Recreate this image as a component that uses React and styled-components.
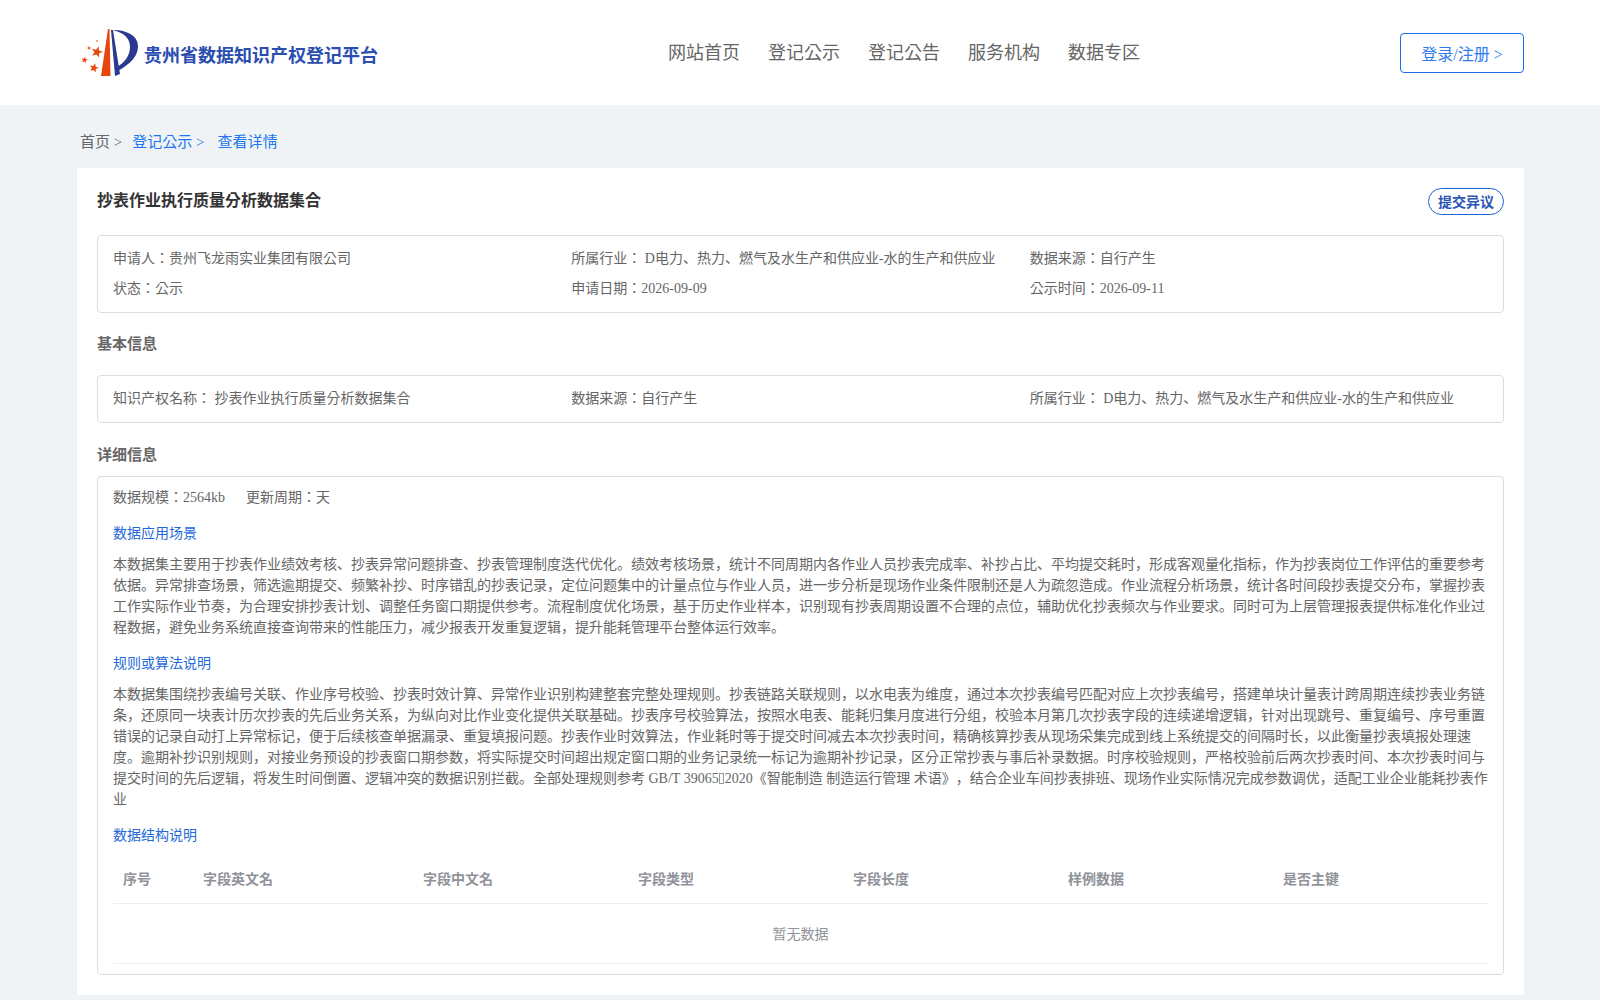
import React from 'react';
import styled, { createGlobalStyle } from 'styled-components';

const Global = createGlobalStyle`
  html, body { margin: 0; padding: 0; background: #eff3f6; }
  body { font-family: "Liberation Serif", "Noto Sans CJK KR", serif; color: #666; text-spacing-trim: space-all; }
  * { box-sizing: border-box; }
`;

const Page = styled.div`
  width: 1600px;
  height: 1000px;
  overflow: hidden;
  display: flex;
  flex-direction: column;
`;

const Header = styled.header`
  height: 105px;
  flex: none;
  background: #fff;
  display: grid;
  grid-template-columns: 588px auto 1fr;
  align-items: center;
  padding: 0 76px 0 80px;
`;

const Brand = styled.div`
  display: flex;
  align-items: center;
  gap: 6px;
`;

const BrandName = styled.span`
  font-size: 18px;
  font-weight: 700;
  color: #2a4eb0;
  position: relative;
  top: 1px;
`;

const Nav = styled.nav`
  display: flex;
  gap: 28px;
`;

const NavItem = styled.a`
  font-size: 18px;
  line-height: 26px;
  color: #666;
`;

const Login = styled.button`
  justify-self: end;
  width: 124px;
  height: 40px;
  background: #fff;
  border: 1px solid #1a6fe8;
  border-radius: 4px;
  color: #2f7cf0;
  font: inherit;
  font-size: 16px;
`;

const Crumbs = styled.div`
  height: 63px;
  flex: none;
  display: flex;
  align-items: center;
  padding: 7px 0 0 80px;
  font-size: 15px;
`;

const Crumb = styled.span`
  color: ${p => (p.$link ? '#2277ee' : '#666')};
  margin-right: ${p => p.$gap || 0}px;
`;

const Card = styled.main`
  margin: 0 76px 0 77px;
  height: 827px;
  flex: none;
  background: #fff;
  padding: 20px 20px;
`;

const TitleRow = styled.div`
  display: flex;
  justify-content: space-between;
  align-items: flex-start;
  height: 47px;
`;

const Title = styled.h1`
  margin: 1px 0 0;
  font-size: 16px;
  font-weight: 700;
  line-height: 24px;
  color: #333;
`;

const Objection = styled.button`
  width: 76px;
  height: 27px;
  padding: 0 0 2px;
  background: #fff;
  border: 1px solid #1a62d8;
  border-radius: 14px;
  color: #2a55b5;
  font: inherit;
  font-size: 14px;
  font-weight: 700;
`;

const Panel = styled.section`
  border: 1px solid #ddd;
  border-radius: 4px;
  padding: ${p => p.$pad || '0 15px'};
  height: ${p => (p.$h ? `${p.$h}px` : 'auto')};
`;

const InfoGrid = styled.div`
  display: grid;
  grid-template-columns: repeat(3, 1fr);
  row-gap: 9px;
  font-size: 14px;
  line-height: 21px;
`;

const SectionTitle = styled.h2`
  margin: 0;
  font-size: 15px;
  font-weight: 700;
  line-height: 22px;
  color: #666;
  padding-top: ${p => p.$top}px;
  padding-bottom: ${p => p.$bottom}px;
`;

const Meta = styled.div`
  display: flex;
  gap: 21px;
  font-size: 14px;
  line-height: 21px;
`;

const SubHeading = styled.h3`
  margin: ${p => p.$top}px 0 ${p => p.$bottom}px;
  font-size: 14px;
  font-weight: 400;
  line-height: 21px;
  color: #1f6ad8;
`;

const Para = styled.p`
  margin: 0;
  font-size: 14px;
  line-height: 21px;
  color: #666;
  word-break: break-all;
`;

const Tofu = styled.span`
  display: inline-block;
  width: 5px;
  height: 11px;
  margin: 0 0.5px;
  vertical-align: -1px;
  border: 1px solid #999;
`;

const Table = styled.table`
  width: 100%;
  border-collapse: collapse;
  table-layout: fixed;
  margin-top: 8px;
`;

const Th = styled.th`
  width: ${p => p.$w}px;
  height: 49px;
  padding: 0 10px;
  text-align: left;
  font-size: 14px;
  font-weight: 700;
  color: #909399;
  border-bottom: 1px solid #ebeef5;
`;

const Empty = styled.td`
  height: 60px;
  text-align: center;
  font-size: 14px;
  color: #909399;
  border-bottom: 1px solid #ebeef5;
`;

const starPath = (cx, cy, r, rot) => {
  const pts = [];
  for (let i = 0; i < 10; i++) {
    const rad = i % 2 === 0 ? r : r * 0.42;
    const a = ((-90 + rot + i * 36) * Math.PI) / 180;
    pts.push(`${(cx + rad * Math.cos(a)).toFixed(2)},${(cy + rad * Math.sin(a)).toFixed(2)}`);
  }
  return `M${pts.join('L')}Z`;
};

const Logo = () => (
  <svg width="58" height="52" viewBox="0 0 58 52" style={{ flex: 'none' }}>
    <path d="M28 2 L29.5 2 L30.5 49 L21 49 Z" fill="#e8460f" />
    <path d="M31 3 L33 3 L40 47 L35 49 Z" fill="#2b3990" />
    <path d="M33 3 C47 3 58 9 58 19 C58 32 46 39 38 44 L37 40 C44 36 50 29 50 20 C50 11 44 6 33 3 Z" fill="#2b3990" />
    <path d={starPath(17, 25, 6, 15)} fill="#e8460f" />
    <path d={starPath(4.5, 33, 3.4, 10)} fill="#e8460f" />
    <path d={starPath(14, 41, 4.8, 15)} fill="#e8460f" />
    <circle cx="9" cy="21" r="1.5" fill="#ec6a3c" />
    <circle cx="17" cy="14" r="1" fill="#ec8a66" />
  </svg>
);

const navItems = ['网站首页', '登记公示', '登记公告', '服务机构', '数据专区'];
const summary = [
  '申请人：贵州飞龙雨实业集团有限公司',
  '所属行业： D电力、热力、燃气及水生产和供应业-水的生产和供应业',
  '数据来源：自行产生',
  '状态：公示',
  '申请日期：2026-09-09',
  '公示时间：2026-09-11',
];
const basics = [
  '知识产权名称： 抄表作业执行质量分析数据集合',
  '数据来源：自行产生',
  '所属行业： D电力、热力、燃气及水生产和供应业-水的生产和供应业',
];
const columns = [
  ['序号', 80], ['字段英文名', 220], ['字段中文名', 215], ['字段类型', 215],
  ['字段长度', 215], ['样例数据', 215], ['是否主键', 215],
];

export default function App() {
  return (
    <Page>
      <Global />
      <Header>
        <Brand>
          <Logo />
          <BrandName>贵州省数据知识产权登记平台</BrandName>
        </Brand>
        <Nav>
          {navItems.map(n => <NavItem key={n}>{n}</NavItem>)}
        </Nav>
        <Login>登录/注册 &gt;</Login>
      </Header>
      <Crumbs>
        <Crumb $gap={10}>首页 &gt;</Crumb>
        <Crumb $link $gap={13}>登记公示 &gt;</Crumb>
        <Crumb $link>查看详情</Crumb>
      </Crumbs>
      <Card>
        <TitleRow>
          <Title>抄表作业执行质量分析数据集合</Title>
          <Objection>提交异议</Objection>
        </TitleRow>
        <Panel $pad="12px 15px 13px">
          <InfoGrid>
            {summary.map(s => <span key={s}>{s}</span>)}
          </InfoGrid>
        </Panel>
        <SectionTitle $top={20} $bottom={20}>基本信息</SectionTitle>
        <Panel $pad="12px 15px 13px">
          <InfoGrid>
            {basics.map(s => <span key={s}>{s}</span>)}
          </InfoGrid>
        </Panel>
        <SectionTitle $top={21} $bottom={10}>详细信息</SectionTitle>
        <Panel $pad="10px 15px 0" $h={499}>
          <Meta>
            <span>数据规模：2564kb</span>
            <span>更新周期：天</span>
          </Meta>
          <SubHeading $top={15} $bottom={10}>数据应用场景</SubHeading>
          <Para>本数据集主要用于抄表作业绩效考核、抄表异常问题排查、抄表管理制度迭代优化。绩效考核场景，统计不同周期内各作业人员抄表完成率、补抄占比、平均提交耗时，形成客观量化指标，作为抄表岗位工作评估的重要参考依据。异常排查场景，筛选逾期提交、频繁补抄、时序错乱的抄表记录，定位问题集中的计量点位与作业人员，进一步分析是现场作业条件限制还是人为疏忽造成。作业流程分析场景，统计各时间段抄表提交分布，掌握抄表工作实际作业节奏，为合理安排抄表计划、调整任务窗口期提供参考。流程制度优化场景，基于历史作业样本，识别现有抄表周期设置不合理的点位，辅助优化抄表频次与作业要求。同时可为上层管理报表提供标准化作业过程数据，避免业务系统直接查询带来的性能压力，减少报表开发重复逻辑，提升能耗管理平台整体运行效率。</Para>
          <SubHeading $top={15} $bottom={10}>规则或算法说明</SubHeading>
          <Para>本数据集围绕抄表编号关联、作业序号校验、抄表时效计算、异常作业识别构建整套完整处理规则。抄表链路关联规则，以水电表为维度，通过本次抄表编号匹配对应上次抄表编号，搭建单块计量表计跨周期连续抄表业务链条，还原同一块表计历次抄表的先后业务关系，为纵向对比作业变化提供关联基础。抄表序号校验算法，按照水电表、能耗归集月度进行分组，校验本月第几次抄表字段的连续递增逻辑，针对出现跳号、重复编号、序号重置错误的记录自动打上异常标记，便于后续核查单据漏录、重复填报问题。抄表作业时效算法，作业耗时等于提交时间减去本次抄表时间，精确核算抄表从现场采集完成到线上系统提交的间隔时长，以此衡量抄表填报处理速度。逾期补抄识别规则，对接业务预设的抄表窗口期参数，将实际提交时间超出规定窗口期的业务记录统一标记为逾期补抄记录，区分正常抄表与事后补录数据。时序校验规则，严格校验前后两次抄表时间、本次抄表时间与提交时间的先后逻辑，将发生时间倒置、逻辑冲突的数据识别拦截。全部处理规则参考 GB/T 39065<Tofu />2020《智能制造 制造运行管理 术语》，结合企业车间抄表排班、现场作业实际情况完成参数调优，适配工业企业能耗抄表作业</Para>
          <SubHeading $top={15} $bottom={0}>数据结构说明</SubHeading>
          <Table>
            <thead>
              <tr>{columns.map(([t, w]) => <Th key={t} $w={w}>{t}</Th>)}</tr>
            </thead>
            <tbody>
              <tr><Empty colSpan={7}>暂无数据</Empty></tr>
            </tbody>
          </Table>
        </Panel>
      </Card>
    </Page>
  );
}
